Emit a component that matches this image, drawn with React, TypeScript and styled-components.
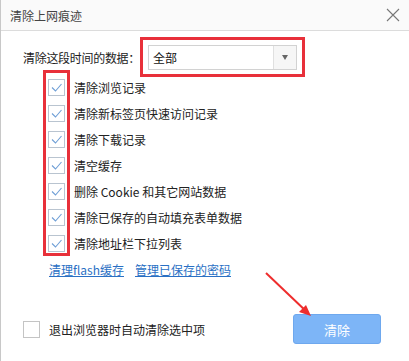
import * as React from 'react';
import styled, { createGlobalStyle } from 'styled-components';

const GlobalStyle = createGlobalStyle`
    html, body {
        margin: 0;
        padding: 0;
        background: #fff;
    }
    body {
        font-family: "Noto Sans CJK SC", "Microsoft YaHei", "Liberation Sans", sans-serif;
        font-size: 12px;
        color: #333;
    }
`;

const options = [
    '清除浏览记录',
    '清除新标签页快速访问记录',
    '清除下载记录',
    '清空缓存',
    '删除 Cookie 和其它网站数据',
    '清除已保存的自动填充表单数据',
    '清除地址栏下拉列表',
];

const CheckMark = () => (
    <svg width="13" height="13" viewBox="0 0 13 13">
        <path d="M2 6.5 L5.5 10 L11.5 3" fill="none" stroke="#6f9fd6" strokeWidth="1.1" />
    </svg>
);

const CloseIcon = () => (
    <svg width="14" height="14" viewBox="0 0 14 14">
        <path d="M1 1 L13 13 M13 1 L1 13" stroke="#777" strokeWidth="1.1" />
    </svg>
);

export default function App() {
    return (
        <Dialog>
            <GlobalStyle />
            <TitleBar>
                <Title>清除上网痕迹</Title>
                <CloseButton><CloseIcon /></CloseButton>
            </TitleBar>
            <Body>
                <TimeRow>
                    <TimeLabel>清除这段时间的数据：</TimeLabel>
                    <Highlight>
                        <Select>
                            <SelectValue>全部</SelectValue>
                            <SelectArrow />
                        </Select>
                    </Highlight>
                </TimeRow>
                <OptionList>
                    <CheckFrame />
                    {options.map((label) => (
                        <OptionRow key={label}>
                            <Box $checked><CheckMark /></Box>
                            <OptionLabel>{label}</OptionLabel>
                        </OptionRow>
                    ))}
                </OptionList>
                <Links>
                    <Link>清理flash缓存</Link>
                    <Link>管理已保存的密码</Link>
                </Links>
                <Footer>
                    <AutoClear>
                        <Box />
                        <span>退出浏览器时自动清除选中项</span>
                    </AutoClear>
                    <ClearButton>清除</ClearButton>
                </Footer>
            </Body>
            <Arrow width="60" height="60" viewBox="0 0 60 60">
                <line x1="2" y1="2" x2="44" y2="42" stroke="#ee2d2d" strokeWidth="2" />
                <polygon points="47,45 35,41 42,34" fill="#ee2d2d" />
            </Arrow>
        </Dialog>
    );
}

const Dialog = styled.div`
    position: relative;
    width: 409px;
    height: 361px;
    box-sizing: border-box;
    border-left: 1px solid #c8c8c8;
    background: #fff;
    overflow: hidden;
`;

const TitleBar = styled.div`
    display: flex;
    align-items: center;
    justify-content: space-between;
    height: 30px;
    padding: 0 6px 0 9px;
    border-bottom: 1px solid #dcdcdc;
    background: #fafafa;
`;

const Title = styled.div`
    font-size: 12px;
    color: #444;
`;

const CloseButton = styled.div`
    display: flex;
    width: 20px;
    height: 20px;
    align-items: center;
    justify-content: center;
`;

const Body = styled.div`
    display: flex;
    flex-direction: column;
`;

const TimeRow = styled.div`
    display: flex;
    align-items: center;
    margin-top: 6px;
    padding-left: 22px;
`;

const TimeLabel = styled.div`
    flex: 0 0 117px;
    white-space: nowrap;
    font-size: 12px;
    letter-spacing: -0.3px;
    color: #222;
`;

const Highlight = styled.div`
    border: 3px solid #e8303a;
    padding: 5px 5px 4px 5px;
`;

const Select = styled.div`
    display: flex;
    width: 149px;
    height: 25px;
    box-sizing: border-box;
    border: 1px solid #d2d2d2;
    background: #fff;
`;

const SelectValue = styled.div`
    flex: 1;
    display: flex;
    align-items: center;
    padding-left: 4px;
    font-size: 12px;
    color: #111;
`;

const SelectArrow = styled.div`
    width: 22px;
    border-left: 1px solid #e0e0e0;
    background: #f6f6f6;
    display: flex;
    align-items: center;
    justify-content: center;

    &::after {
        content: "";
        border-left: 3px solid transparent;
        border-right: 3px solid transparent;
        border-top: 5px solid #666;
    }
`;

const OptionList = styled.div`
    position: relative;
    display: flex;
    flex-direction: column;
    margin-top: -3px;
    padding-left: 47px;
`;

const CheckFrame = styled.div`
    position: absolute;
    left: 42px;
    top: -4px;
    width: 21px;
    height: 180px;
    border: 3px solid #e8303a;
`;

const OptionRow = styled.div`
    display: flex;
    align-items: center;
    height: 26px;
`;

const Box = styled.div<{ $checked?: boolean }>`
    display: flex;
    align-items: center;
    justify-content: center;
    width: 17px;
    height: 17px;
    box-sizing: border-box;
    border: 1px solid ${p => p.$checked ? '#b9c4d0' : '#c4c4c4'};
    background: #fff;
    flex-shrink: 0;
`;

const OptionLabel = styled.span`
    margin-left: 9px;
    font-size: 12px;
    color: #222;
`;

const Links = styled.div`
    display: flex;
    gap: 11px;
    margin-top: 5px;
    padding-left: 48px;
    height: 16px;
    align-items: center;
`;

const Link = styled.a`
    font-size: 12px;
    color: #2a70c4;
    text-decoration: underline;
    cursor: pointer;
`;

const Footer = styled.div`
    display: flex;
    align-items: center;
    justify-content: space-between;
    margin-top: 37px;
    padding: 0 28px 0 22px;
`;

const AutoClear = styled.div`
    display: flex;
    align-items: center;
    gap: 9px;
    font-size: 12px;
    color: #222;
`;

const ClearButton = styled.button`
    width: 88px;
    height: 30px;
    border: 1px solid #6ea8ee;
    border-radius: 3px;
    background: #7db5f7;
    color: #fff;
    font-family: inherit;
    font-size: 13px;
    cursor: pointer;
`;

const Arrow = styled.svg`
    position: absolute;
    left: 263px;
    top: 271px;
`;
